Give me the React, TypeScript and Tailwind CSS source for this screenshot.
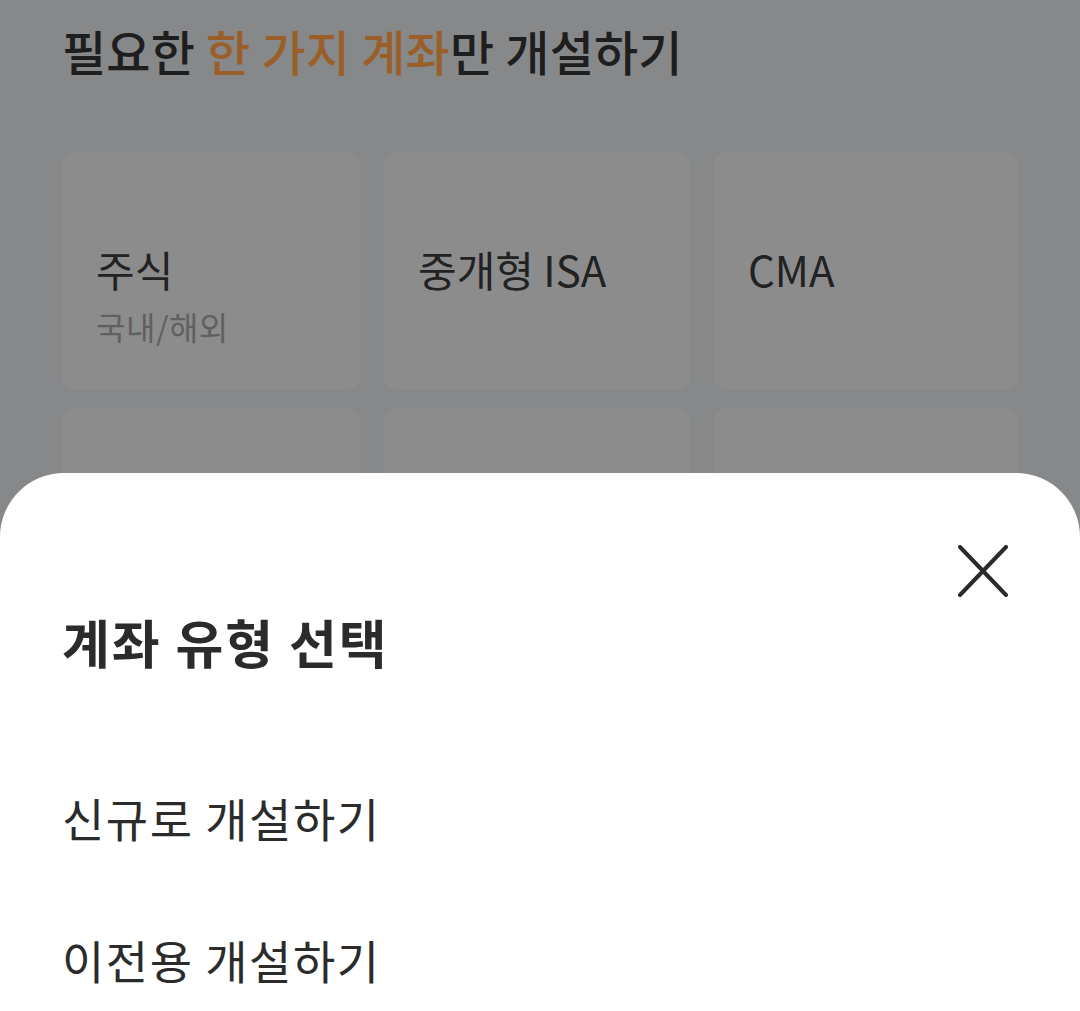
import React from "react";

const font = { fontFamily: '"Noto Sans CJK KR", "Noto Sans", sans-serif' };

const cards = [
  { title: "주식", sub: "국내/해외" },
  { title: "중개형 ISA" },
  { title: "CMA" },
  { title: "" },
  { title: "" },
  { title: "" },
];

export default function App() {
  return (
    <div className="relative h-[1011px] w-[1080px] overflow-hidden bg-[#87888a]" style={font}>
      {/* dimmed page behind the sheet */}
      <div className="px-[62px] pt-[18px]">
        <h1 className="text-[48px] leading-[64px] font-medium tracking-[0.2px] text-[#1e1e1e]">
          필요한 <span className="text-[#9a5f29]">한 가지 계좌</span>만 개설하기
        </h1>
        <div className="mt-[70px] grid grid-cols-[298px_306px_304px] gap-x-[24px] gap-y-[18px]">
          {cards.map((c, i) => (
            <div key={i} className="h-[238px] rounded-[14px] bg-[#8c8c8c] pl-[34px] pt-[90px]">
              {c.title && <div className="text-[42px] leading-[54px] text-[#222]">{c.title}</div>}
              {c.sub && <div className="mt-[9px] text-[32px] leading-[42px] tracking-[0.5px] text-[#606060]">{c.sub}</div>}
            </div>
          ))}
        </div>
      </div>

      {/* bottom sheet */}
      <div className="absolute inset-x-0 bottom-0 top-[473px] rounded-t-[64px] bg-white px-[62px]">
        <div className="flex justify-end pt-[72px] pr-[10px]">
          <svg width="50" height="52" viewBox="0 0 50 52" fill="none" stroke="#2b2b2b" strokeWidth="4" strokeLinecap="round">
            <path d="M2 2 L48 50 M48 2 L2 50" />
          </svg>
        </div>
        <h2 className="mt-[12px] text-[52px] leading-[66px] font-bold tracking-[2px] text-[#2b2b2b]">계좌 유형 선택</h2>
        <div className="mt-[112px] text-[46px] leading-[60px] tracking-[1.5px] text-[#2b2b2b]">신규로 개설하기</div>
        <div className="mt-[82px] text-[46px] leading-[60px] tracking-[1.5px] text-[#2b2b2b]">이전용 개설하기</div>
      </div>
    </div>
  );
}
